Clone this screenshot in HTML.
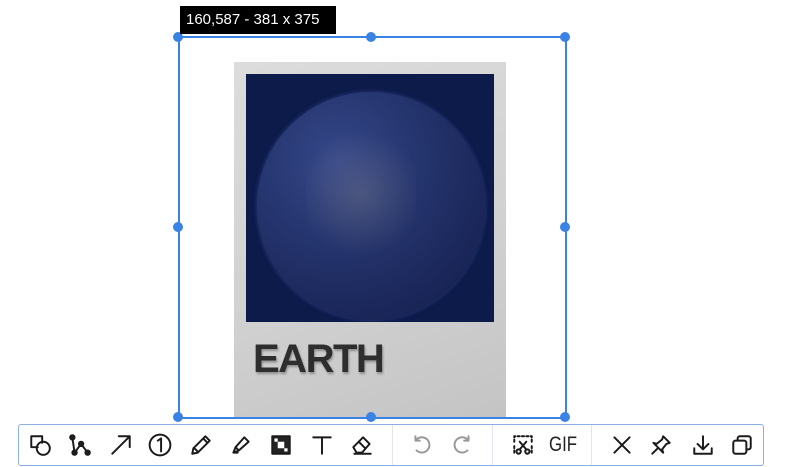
<!DOCTYPE html>
<html><head><style>
body{margin:0;width:786px;height:467px;background:#fff;position:relative;overflow:hidden;font-family:"Liberation Sans",sans-serif}
.a{position:absolute}
.h{position:absolute;width:10px;height:10px;border-radius:50%;background:#3b82e6;margin:-5px 0 0 -5px}
.tb{left:18px;top:424px;width:744px;height:40px;border:1px solid #8ab0e6;border-radius:3px;background:#fff}
.sep{position:absolute;top:0;width:1px;height:40px;background:#e2e6ee}
svg.i{position:absolute;top:8px;width:24px;height:24px;fill:none;stroke:#1a1a1a;stroke-width:1.8;stroke-linecap:round;stroke-linejoin:round}
</style></head><body>
<div class="a" style="left:234px;top:62px;width:272px;height:356px;background:linear-gradient(160deg,#dcdcdc,#d0d0d0 60%,#c4c4c4)"></div>
<div class="a" style="left:246px;top:74px;width:248px;height:248px;background:#0d1b4a;overflow:hidden">
 <div class="a" style="left:11px;top:18px;width:228px;height:228px;border-radius:50%;background:radial-gradient(circle at 35% 30%,#36488a 0%,#263670 35%,#1b275a 70%,#131d4a 100%);box-shadow:0 0 4px #2c3e80"></div>
 <div class="a" style="left:60px;top:50px;width:110px;height:140px;border-radius:40%;background:radial-gradient(circle,rgba(210,190,140,.18),rgba(0,0,0,0) 70%)"></div>
</div>
<div class="a" style="left:253px;top:337px;font-size:40px;font-weight:bold;color:#2e2e2e;letter-spacing:-1.5px;text-shadow:1px 2px 2px rgba(0,0,0,.3)">EARTH</div>
<div class="a" style="left:178px;top:36px;width:385px;height:379px;border:2px solid #3b82e6"></div>
<div class="h" style="left:178px;top:37px"></div><div class="h" style="left:371px;top:37px"></div><div class="h" style="left:565px;top:37px"></div>
<div class="h" style="left:178px;top:227px"></div><div class="h" style="left:565px;top:227px"></div>
<div class="h" style="left:178px;top:417px"></div><div class="h" style="left:371px;top:417px"></div><div class="h" style="left:565px;top:417px"></div>
<div class="a" style="left:180px;top:6px;width:156px;height:28px;background:#000;color:#fff;font-size:15px;line-height:28px;text-indent:6px">160,587 - 381 x 375</div>
<div class="a tb">
<div class="sep" style="left:373px"></div><div class="sep" style="left:473px"></div><div class="sep" style="left:572px"></div>
<svg class="i" style="left:9px" viewBox="0 0 22 22"><path d="M3 3h10v6M3 3v10h6"/><circle cx="14" cy="14" r="6"/></svg>
<svg class="i" style="left:49px" viewBox="0 0 22 22"><path d="M4 4l2 14 6-8 6 8"/><circle cx="4" cy="4" r="2" fill="#222"/><circle cx="6" cy="18" r="2" fill="#222"/><circle cx="12" cy="10" r="2" fill="#222"/><circle cx="18" cy="18" r="2" fill="#222"/></svg>
<svg class="i" style="left:90px" viewBox="0 0 22 22"><path d="M3 19L19 3M9 3h10v10"/></svg>
<svg class="i" style="left:129px" viewBox="0 0 22 22"><circle cx="11" cy="11" r="9.5"/><path d="M9 7l3-2v12"/></svg>
<svg class="i" style="left:170px" viewBox="0 0 22 22"><path d="M3 19l1-5L15 3l4 4L8 18zM13 5l4 4M5 14l3 3"/></svg>
<svg class="i" style="left:210px" viewBox="0 0 22 22"><path d="M4 18l2-5 8-9 4 4-9 8zM4 18h4M6 13l3 3"/></svg>
<svg class="i" style="left:250px" viewBox="0 0 22 22"><rect x="3" y="3" width="16" height="16" fill="#222"/><rect x="8" y="8" width="6" height="6" fill="#fff" stroke="none"/><rect x="5" y="5" width="3" height="3" fill="#fff" stroke="none"/><rect x="14" y="14" width="3" height="3" fill="#fff" stroke="none"/></svg>
<svg class="i" style="left:291px" viewBox="0 0 22 22"><path d="M3 4h16M11 4v15"/></svg>
<svg class="i" style="left:331px" viewBox="0 0 22 22"><path d="M3 13l9-9 6 6-7 8H6zM8 8l6 6M4 19h15"/></svg>
<svg class="i" style="left:391px;stroke:#999" viewBox="0 0 22 22"><path d="M5 7a7 7 0 1 1 1 9M5 3v4h4"/></svg>
<svg class="i" style="left:431px;stroke:#999" viewBox="0 0 22 22"><path d="M17 7a7 7 0 1 0-1 9M17 3v4h-4"/></svg>
<svg class="i" style="left:492px" viewBox="0 0 22 22"><path d="M3 8V3h16v5M3 12v6M19 12v6" stroke-dasharray="2 2"/><circle cx="7" cy="17" r="2"/><circle cx="15" cy="17" r="2"/><path d="M8 15l6-7M14 15L8 8"/></svg>
<div class="a" style="left:530px;top:8px;font-size:21px;color:#222;line-height:24px;transform:scaleX(.8);transform-origin:left">GIF</div>
<svg class="i" style="left:591px" viewBox="0 0 22 22"><path d="M4 4l14 14M18 4L4 18"/></svg>
<svg class="i" style="left:630px" viewBox="0 0 22 22"><path d="M13 3l6 6-3 1-4 5 1 3-9-9 3 1 5-4zM8 14l-5 5"/></svg>
<svg class="i" style="left:672px" viewBox="0 0 22 22"><path d="M11 3v12M6 10l5 5 5-5M3 14v5h16v-5"/></svg>
<svg class="i" style="left:711px" viewBox="0 0 22 22"><rect x="3" y="7" width="12" height="12" rx="2"/><path d="M7 7V5a2 2 0 0 1 2-2h8a2 2 0 0 1 2 2v8a2 2 0 0 1-2 2h-2"/></svg>
</div>
</body></html>
